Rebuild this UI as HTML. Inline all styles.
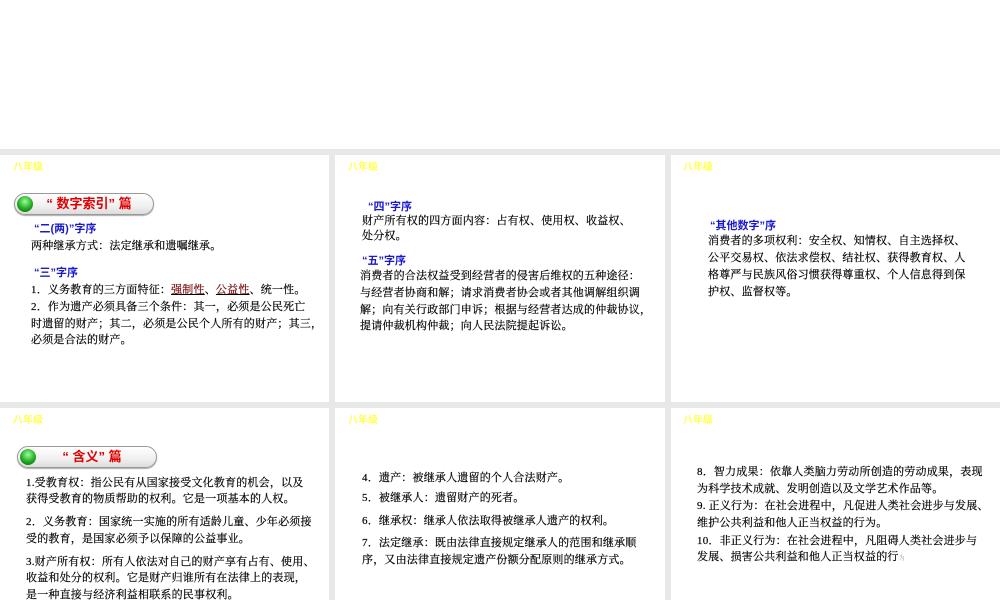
<!DOCTYPE html>
<html><head><meta charset="utf-8"><style>
body{margin:0;width:1000px;height:600px;background:#fff;position:relative;overflow:hidden;font-family:"Liberation Serif","Noto Serif CJK SC",serif;}
.g{position:absolute;background:#e8e8e8}
.t{position:absolute;font-size:11px;line-height:16px;white-space:nowrap;color:#000;letter-spacing:0.2px;-webkit-text-stroke:0.2px #000}
.h{position:absolute;font-size:11px;line-height:16px;white-space:nowrap;color:#1a1acc;font-weight:bold;font-family:"Liberation Sans","Noto Sans CJK SC",sans-serif}
.y{position:absolute;font-size:10px;line-height:12px;color:#ffff55;font-weight:bold;font-family:"Liberation Sans","Noto Sans CJK SC",sans-serif}
.pill{position:absolute;width:138px;height:20px;border:1px solid #999;border-radius:11px;background:linear-gradient(#ffffff,#f0f0f0 60%,#dcdcdc);box-shadow:0 1px 1px #aaa}
.dot{position:absolute;left:2px;top:2px;width:16px;height:16px;border-radius:50%;background:radial-gradient(circle at 50% 35%,#9f9,#2a2 55%,#060);}
.pt{position:absolute;left:10px;right:0;top:1px;text-align:center;color:#e00000;font-weight:bold;font-size:13px;line-height:18px;font-family:"Liberation Sans","Noto Sans CJK SC",sans-serif}
.r{color:#e00;text-decoration:underline}
</style></head><body>
<div class="g" style="left:0;top:149px;width:1000px;height:6px"></div>
<div class="g" style="left:0;top:402px;width:1000px;height:6px"></div>
<div class="g" style="left:329px;top:149px;width:6px;height:451px"></div>
<div class="g" style="left:665px;top:149px;width:6px;height:451px"></div>

<div class="y" style="left:13px;top:162px">八年级</div>
<div class="y" style="left:348px;top:162px">八年级</div>
<div class="y" style="left:683px;top:162px">八年级</div>
<div class="y" style="left:13px;top:415px">八年级</div>
<div class="y" style="left:348px;top:415px">八年级</div>
<div class="y" style="left:683px;top:415px">八年级</div>

<div class="pill" style="left:14px;top:193px"><div class="dot"></div><div class="pt">“ 数字索引” 篇</div></div>
<div class="h" style="left:34px;top:221px">“二(两)”字序</div>
<div class="t" style="left:31px;top:238px">两种继承方式：法定继承和遗嘱继承。</div>
<div class="h" style="left:34px;top:265px">“三”字序</div>
<div class="t" style="left:31px;top:282px">1．义务教育的三方面特征：<span class="r">强制性</span>、<span class="r">公益性</span>、统一性。</div>
<div class="t" style="left:31px;top:299px">2．作为遗产必须具备三个条件：其一，必须是公民死亡</div>
<div class="t" style="left:31px;top:316px">时遗留的财产；其二，必须是公民个人所有的财产；其三，</div>
<div class="t" style="left:31px;top:332px">必须是合法的财产。</div>

<div class="h" style="left:368px;top:199px">“四”字序</div>
<div class="t" style="left:362px;top:213px">财产所有权的四方面内容：占有权、使用权、收益权、</div>
<div class="t" style="left:362px;top:228px">处分权。</div>
<div class="h" style="left:362px;top:253px">“五”字序</div>
<div class="t" style="left:360px;top:268px">消费者的合法权益受到经营者的侵害后维权的五种途径：</div>
<div class="t" style="left:360px;top:285px">与经营者协商和解；请求消费者协会或者其他调解组织调</div>
<div class="t" style="left:360px;top:302px">解；向有关行政部门申诉；根据与经营者达成的仲裁协议，</div>
<div class="t" style="left:360px;top:318px">提请仲裁机构仲裁；向人民法院提起诉讼。</div>

<div class="h" style="left:710px;top:218px">“其他数字”序</div>
<div class="t" style="left:708px;top:233px">消费者的多项权利：安全权、知情权、自主选择权、</div>
<div class="t" style="left:708px;top:250px">公平交易权、依法求偿权、结社权、获得教育权、人</div>
<div class="t" style="left:708px;top:267px">格尊严与民族风俗习惯获得尊重权、个人信息得到保</div>
<div class="t" style="left:708px;top:284px">护权、监督权等。</div>

<div class="pill" style="left:17px;top:446px"><div class="dot"></div><div class="pt">“ 含义” 篇</div></div>
<div class="t" style="left:26px;top:475px">1.受教育权：指公民有从国家接受文化教育的机会，以及</div>
<div class="t" style="left:26px;top:491px">获得受教育的物质帮助的权利。它是一项基本的人权。</div>
<div class="t" style="left:26px;top:514px">2．义务教育：国家统一实施的所有适龄儿童、少年必须接</div>
<div class="t" style="left:26px;top:531px">受的教育，是国家必须予以保障的公益事业。</div>
<div class="t" style="left:26px;top:554px">3.财产所有权：所有人依法对自己的财产享有占有、使用、</div>
<div class="t" style="left:26px;top:570px">收益和处分的权利。它是财产归谁所有在法律上的表现，</div>
<div class="t" style="left:26px;top:587px">是一种直接与经济利益相联系的民事权利。</div>

<div class="t" style="left:362px;top:470px">4．遗产：被继承人遗留的个人合法财产。</div>
<div class="t" style="left:362px;top:490px">5．被继承人：遗留财产的死者。</div>
<div class="t" style="left:362px;top:513px">6．继承权：继承人依法取得被继承人遗产的权利。</div>
<div class="t" style="left:362px;top:535px">7．法定继承：既由法律直接规定继承人的范围和继承顺</div>
<div class="t" style="left:362px;top:552px">序，又由法律直接规定遗产份额分配原则的继承方式。</div>

<div class="t" style="left:697px;top:464px">8．智力成果：依靠人类脑力劳动所创造的劳动成果，表现</div>
<div class="t" style="left:697px;top:481px">为科学技术成就、发明创造以及文学艺术作品等。</div>
<div class="t" style="left:697px;top:498px">9. 正义行为：在社会进程中，凡促进人类社会进步与发展、</div>
<div class="t" style="left:697px;top:515px">维护公共利益和他人正当权益的行为。</div>
<div class="t" style="left:697px;top:533px">10．非正义行为：在社会进程中，凡阻碍人类社会进步与</div>
<div class="t" style="left:697px;top:549px">发展、损害公共利益和他人正当权益的行<span style="font-size:6px;color:#999;-webkit-text-stroke:0">为</span></div>
</body></html>
